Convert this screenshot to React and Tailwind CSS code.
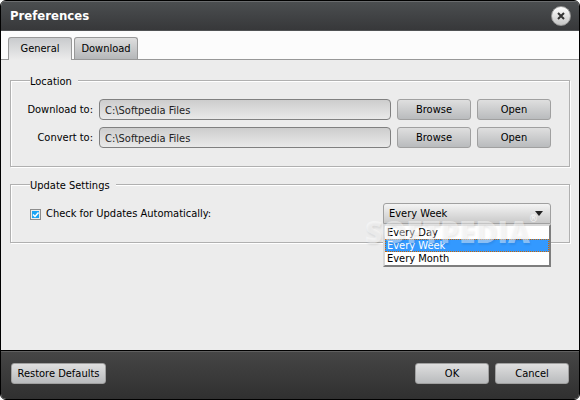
import { useState } from 'react';

const FREQUENCIES = ['Every Day', 'Every Week', 'Every Month'];

const BUTTON = 'h-[21px] rounded-[3px] border border-[#a0a0a0] bg-linear-to-b from-[#dfdfdf] to-[#b9bbbd] leading-none text-black';

const LOCATIONS = [
    { id: 'download-to', label: 'Download to:', value: 'C:\\Softpedia Files' },
    { id: 'convert-to', label: 'Convert to:', value: 'C:\\Softpedia Files' },
];

function Group({ title, className, children }) {
    return (
        <fieldset className={`min-w-0 border border-[#b0b0b0] pl-[19px] pr-[18px] shadow-[1px_1px_0_#fff,inset_1px_1px_0_#fff] ${className}`}>
            <legend className="h-4 bg-[#ececec] pr-[6px] leading-5">{title}</legend>
            {children}
        </fieldset>
    );
}

function LocationRow({ id, label, value }) {
    const [path, setPath] = useState(value);

    return (
        <div className="flex items-center gap-[6px]">
            <label htmlFor={id} className="flex w-[63px] shrink-0 justify-end whitespace-nowrap pt-[2px]">{label}</label>
            <input
                id={id}
                type="text"
                value={path}
                onChange={e => setPath(e.target.value)}
                className="h-[21px] min-w-0 flex-1 rounded-[4px] border border-[#808080] bg-linear-to-b from-[#cdcdcd] to-[#e9e9e9] px-[5px] pt-[2px] text-[#222] outline-none"
            />
            <button type="button" className={`${BUTTON} w-[74px]`}>Browse</button>
            <button type="button" className={`${BUTTON} w-[74px]`}>Open</button>
        </div>
    );
}

function FrequencySelect() {
    const [value, setValue] = useState('Every Week');

    return (
        <div className="relative w-[168px] shrink-0">
            <select
                aria-label="Update frequency"
                value={value}
                onChange={e => setValue(e.target.value)}
                className="block h-[21px] w-full appearance-none rounded-t-[3px] border border-[#a0a0a0] bg-linear-to-b from-[#f4f4f4] to-[#c9c9c9] px-[5px] pt-[2px] outline-none"
            >
                {FREQUENCIES.map(f => <option key={f} value={f}>{f}</option>)}
            </select>
            <svg viewBox="0 0 8 5" className="pointer-events-none absolute right-2 top-2 h-[5px] w-2" fill="#222">
                <path d="M0 0h8L4 5z" />
            </svg>
            <ul role="listbox" className="absolute left-0 top-full w-full border-2 border-[#7e7e7e] border-l-[#d8d8d8] border-t-[#d8d8d8] bg-white">
                {FREQUENCIES.map(f => (
                    <li
                        key={f}
                        role="option"
                        aria-selected={f === value}
                        onClick={() => setValue(f)}
                        className={f === value
                            ? 'h-[13px] border border-dotted border-[#cc6600] bg-[#3399ff] pl-px leading-[11px] text-white'
                            : 'h-[13px] pl-[2px] leading-[13px]'}
                    >
                        {f}
                    </li>
                ))}
            </ul>
            <span className="pointer-events-none absolute -left-[18px] top-[13px] whitespace-nowrap font-['Open_Sans'] text-[30px] font-extrabold leading-8 text-white/45 [text-shadow:1px_2px_2px_rgba(0,0,0,0.08)]">
                SOFTPEDIA
            </span>
            <span className="pointer-events-none absolute right-[13px] top-[10px] text-[10px] leading-3 text-white/80">®</span>
        </div>
    );
}

export default function App() {
    const [tab, setTab] = useState('General');
    const [autoCheck, setAutoCheck] = useState(true);

    return (
        <div className="flex min-h-screen flex-col overflow-hidden rounded-[6px] border border-black bg-[#ececec] font-['DejaVu_Sans_Condensed','DejaVu_Sans',sans-serif] text-[11px] text-black">
            <header className="flex h-[30px] shrink-0 items-center justify-between border-b border-[#505254] bg-linear-to-b from-[#4c4f51] to-[#37383a] pl-[9px] pr-2 shadow-[inset_0_1px_0_#6b6d6f]">
                <h1 className="text-[13px] font-bold text-white">Preferences</h1>
                <button type="button" aria-label="Close" className="flex size-5 items-center justify-center rounded-full border border-[#999] bg-linear-to-b from-white to-[#c4c4c4]">
                    <svg viewBox="0 0 8 8" className="size-2" stroke="#333" strokeWidth="2">
                        <path d="M1 1l6 6M7 1L1 7" />
                    </svg>
                </button>
            </header>

            <div role="tablist" className="flex h-[29px] shrink-0 items-end gap-[2px] border-b border-[#989898] bg-[#fcfcfc] pl-[7px]">
                {['General', 'Download'].map(t => (
                    <button
                        key={t}
                        type="button"
                        role="tab"
                        aria-selected={t === tab}
                        onClick={() => setTab(t)}
                        className={t === tab
                            ? '-mb-px h-[23px] w-16 rounded-t-[3px] border border-b-0 border-[#989898] bg-linear-to-b from-[#c9cbcd] to-[#ececec]'
                            : 'h-[22px] w-16 rounded-t-[3px] border border-b-0 border-[#989898] bg-linear-to-b from-[#dedede] to-[#b5b7b9] pt-[2px]'}
                    >
                        {t}
                    </button>
                ))}
            </div>

            <main className="flex-1 px-[9px] pt-3">
                <Group title="Location" className="pb-[18px]">
                    <div className="flex flex-col gap-[7px] pt-[11px]">
                        {LOCATIONS.map(l => <LocationRow key={l.id} {...l} />)}
                    </div>
                </Group>
                <Group title="Update Settings" className="mt-[9px] pb-[18px]">
                    <div className="flex items-center justify-between pt-[11px]">
                        <label className="flex items-center gap-[5px] pt-[2px]">
                            <span className="relative flex">
                                <input
                                    type="checkbox"
                                    checked={autoCheck}
                                    onChange={e => setAutoCheck(e.target.checked)}
                                    className="size-[11px] appearance-none border border-[#8c8c8c] bg-white p-px checked:bg-[#1ca4f4] checked:bg-clip-content"
                                />
                                {autoCheck && (
                                    <svg viewBox="0 0 11 11" className="pointer-events-none absolute inset-0" fill="none" stroke="#fff" strokeWidth="1.5">
                                        <path d="M3 5.5l2 2L8.5 3.5" />
                                    </svg>
                                )}
                            </span>
                            Check for Updates Automatically:
                        </label>
                        <FrequencySelect />
                    </div>
                </Group>
            </main>

            <footer className="flex h-[49px] shrink-0 gap-[6px] border-t border-black bg-linear-to-b from-[#464646] to-[#303030] px-[10px] pt-3 shadow-[inset_0_1px_0_#606060]">
                <button type="button" className={`${BUTTON} mr-auto w-[95px]`}>Restore Defaults</button>
                <button type="button" className={`${BUTTON} w-[74px]`}>OK</button>
                <button type="button" className={`${BUTTON} w-[74px]`}>Cancel</button>
            </footer>
        </div>
    );
}
